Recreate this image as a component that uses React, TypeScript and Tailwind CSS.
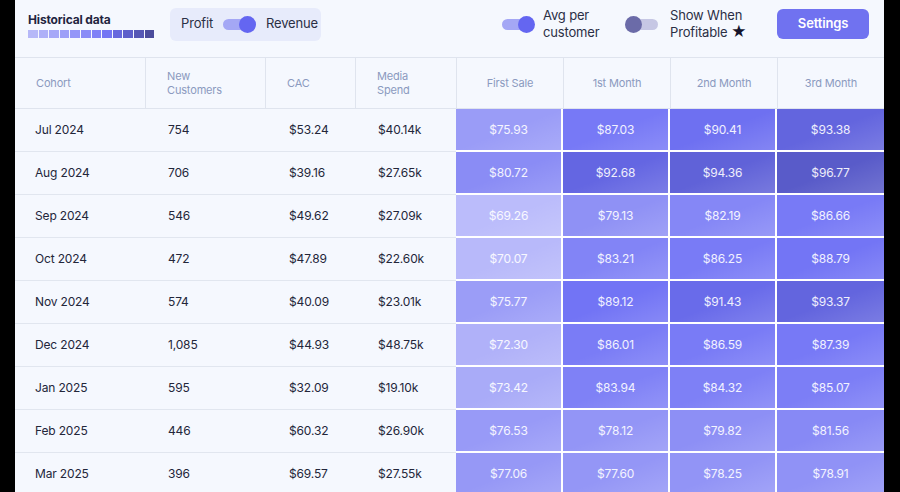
import React from "react";

type Row = {
  cohort: string;
  customers: string;
  cac: string;
  spend: string;
  values: number[];
};

const rows: Row[] = [
  { cohort: "Jul 2024", customers: "754", cac: "$53.24", spend: "$40.14k", values: [75.93, 87.03, 90.41, 93.38] },
  { cohort: "Aug 2024", customers: "706", cac: "$39.16", spend: "$27.65k", values: [80.72, 92.68, 94.36, 96.77] },
  { cohort: "Sep 2024", customers: "546", cac: "$49.62", spend: "$27.09k", values: [69.26, 79.13, 82.19, 86.66] },
  { cohort: "Oct 2024", customers: "472", cac: "$47.89", spend: "$22.60k", values: [70.07, 83.21, 86.25, 88.79] },
  { cohort: "Nov 2024", customers: "574", cac: "$40.09", spend: "$23.01k", values: [75.77, 89.12, 91.43, 93.37] },
  { cohort: "Dec 2024", customers: "1,085", cac: "$44.93", spend: "$48.75k", values: [72.3, 86.01, 86.59, 87.39] },
  { cohort: "Jan 2025", customers: "595", cac: "$32.09", spend: "$19.10k", values: [73.42, 83.94, 84.32, 85.07] },
  { cohort: "Feb 2025", customers: "446", cac: "$60.32", spend: "$26.90k", values: [76.53, 78.12, 79.82, 81.56] },
  { cohort: "Mar 2025", customers: "396", cac: "$69.57", spend: "$27.55k", values: [77.06, 77.6, 78.25, 78.91] },
];

const legend = [
  "#b6b8f8", "#aeb0f8", "#a6a8f8", "#9d9ff8", "#9496f8", "#8a8cf7",
  "#7f81f7", "#7375f4", "#6668de", "#5d5fcb", "#5557b5", "#4b4c9c",
];

// value -> cell colour stops
const stops: [number, [number, number, number]][] = [
  [69, [188, 189, 251]],
  [72, [178, 179, 249]],
  [74, [166, 168, 248]],
  [76, [154, 156, 247]],
  [80, [140, 142, 245]],
  [84, [127, 129, 246]],
  [88, [117, 119, 246]],
  [90, [112, 114, 244]],
  [92, [102, 104, 230]],
  [94, [97, 99, 218]],
  [97, [88, 90, 200]],
];

function cellColor(v: number) {
  if (v <= stops[0][0]) return `rgb(${stops[0][1].join(",")})`;
  for (let i = 1; i < stops.length; i++) {
    const [b, cb] = stops[i];
    const [a, ca] = stops[i - 1];
    if (v <= b) {
      const t = (v - a) / (b - a);
      const c = ca.map((x, k) => Math.round(x + (cb[k] - x) * t));
      return `rgb(${c.join(",")})`;
    }
  }
  return `rgb(${stops[stops.length - 1][1].join(",")})`;
}

function Toggle({ on, track, knob }: { on: boolean; track: string; knob: string }) {
  return (
    <div className="relative w-[33px] h-[17px] shrink-0">
      <div className={`absolute top-[3px] bottom-[3px] rounded-full ${on ? "left-0 right-[3px]" : "left-[3px] right-0"} ${track}`} />
      <div className={`absolute top-0 w-[17px] h-[17px] rounded-full ${on ? "right-0" : "left-0"} ${knob}`} />
    </div>
  );
}

const cols = "grid grid-cols-[131px_120px_90px_100px_107px_107px_107px_107px]";

export default function App() {
  return (
    <div
      className="w-full h-[492px] bg-black overflow-hidden pl-[15px]"
      style={{ fontFamily: "Inter, 'Noto Sans', sans-serif" }}
    >
      <div className="w-[869px] h-full bg-[#f5f8fe] flex flex-col tracking-[-0.01em]">
        {/* Top bar */}
        <div className="h-[58px] shrink-0 border-b border-[#dfe4ee]">
          <div className="h-[48px] flex items-center pl-[13px] pr-[15px]">
            <div className="w-[127px] flex flex-col gap-[2px] pt-[2px]">
              <span className="text-[12px] font-bold text-[#1f2440] leading-[16px]">Historical data</span>
              <div className="flex gap-[1px]">
                {legend.map((c) => (
                  <div key={c} className="w-[9.6px] h-[8px]" style={{ background: c }} />
                ))}
              </div>
            </div>

            <div className="ml-[15px] w-[151px] h-[33px] rounded-md bg-[#e7ebfb] flex items-center pl-[11px] gap-[10px] text-[13px] text-[#2b2f45]">
              <span>Profit</span>
              <Toggle on track="bg-[#a4a7f5]" knob="bg-[#6466f1]" />
              <span>Revenue</span>
            </div>

            <div className="ml-auto w-[123px] flex items-center gap-[8px]">
              <Toggle on track="bg-[#a4a7f5]" knob="bg-[#6466f1]" />
              <span className="text-[13px] leading-[17px] text-[#2b2f45]">
                Avg per
                <br />
                customer
              </span>
            </div>

            <div className="w-[152px] flex items-center gap-[12px]">
              <Toggle on={false} track="bg-[#c6c7e4]" knob="bg-[#6b6ba8]" />
              <span className="text-[13px] leading-[17px] text-[#2b2f45]">
                Show When
                <br />
                Profitable <span className="text-[#14142b] text-[15px] leading-[15px]">★</span>
              </span>
            </div>

            <button className="w-[92px] h-[30px] rounded-md bg-[#7072f0] text-white text-[13px] font-semibold">
              Settings
            </button>
          </div>
        </div>

        {/* Table header */}
        <div className={`${cols} h-[51px] shrink-0 border-b border-[#dfe4ee] text-[11px] leading-[14px] text-[#8b9abf]`}>
          {[["Cohort"], ["New", "Customers"], ["CAC"], ["Media", "Spend"]].map((l, i) => (
            <div key={i} className={`flex items-center pl-[21px] ${i < 3 ? "border-r border-[#dfe4ee]" : ""}`}>
              <span>
                {l[0]}
                {l[1] && <br />}
                {l[1]}
              </span>
            </div>
          ))}
          {["First Sale", "1st Month", "2nd Month", "3rd Month"].map((l) => (
            <div key={l} className="flex items-center justify-center border-l border-[#dfe4ee]">
              {l}
            </div>
          ))}
        </div>

        {/* Body */}
        {rows.map((r) => (
          <div key={r.cohort} className={`${cols} h-[43px] shrink-0 text-[12px] text-[#23263a]`}>
            <div className="flex items-center pl-[20px] border-b border-[#e1e6ef]">{r.cohort}</div>
            <div className="flex items-center pl-[22px] border-b border-[#e1e6ef]">{r.customers}</div>
            <div className="flex items-center pl-[23px] border-b border-[#e1e6ef]">{r.cac}</div>
            <div className="flex items-center pl-[22px] border-b border-[#e1e6ef]">{r.spend}</div>
            {r.values.map((v, i) => (
              <div
                key={i}
                className={`flex items-center justify-center border-b-2 border-white bg-linear-to-br from-white/0 via-white/0 to-white/15 text-[12px] text-white/90 ${i < 3 ? "border-r-2" : ""}`}
                style={{ backgroundColor: cellColor(v) }}
              >
                ${v.toFixed(2)}
              </div>
            ))}
          </div>
        ))}
      </div>
    </div>
  );
}
